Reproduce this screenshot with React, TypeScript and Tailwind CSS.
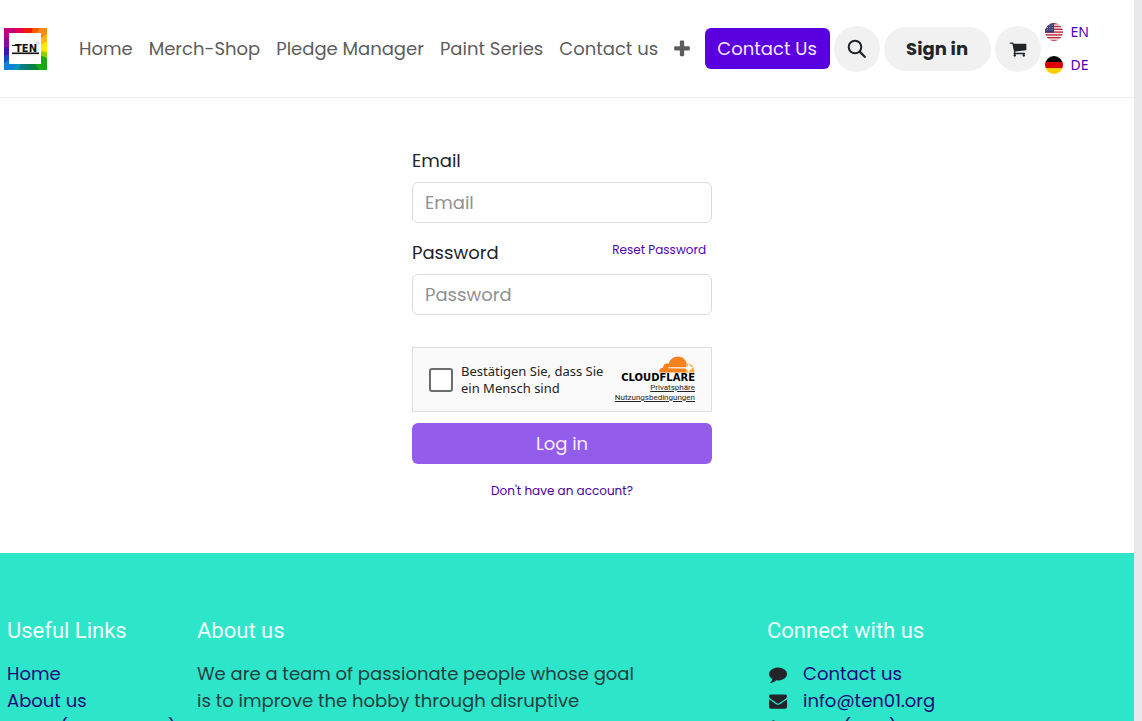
import type { ReactNode } from 'react';

const navLinks = ['Home', 'Merch-Shop', 'Pledge Manager', 'Paint Series', 'Contact us'];

const languages = [
  { code: 'EN', flag: <UsFlag /> },
  { code: 'DE', flag: <GermanFlag /> },
];

const usefulLinks = ['Home', 'About us', 'News (Merch, Pins)'];

function Logo() {
  return (
    <svg viewBox="0 0 43 42" className="h-[42px] w-[43px]" role="img" aria-label="TEN">
      <rect width="43" height="42" fill="#e30613" />
      <polygon points="0,0 12,0 21,21 0,10" fill="#c4007a" />
      <polygon points="10,0 21,0 21,21" fill="#e2004f" />
      <polygon points="19,0 31,0 21,21" fill="#f01a0c" />
      <polygon points="29,0 38,0 21,21" fill="#f55a00" />
      <polygon points="36,0 43,0 43,8 21,21" fill="#f88b13" />
      <polygon points="43,6 43,15 21,21" fill="#fdb913" />
      <polygon points="43,14 43,25 21,21" fill="#ffe900" />
      <polygon points="43,24 43,32 21,21" fill="#8fd000" />
      <polygon points="43,30 43,42 34,42 21,21" fill="#18a818" />
      <polygon points="35,42 25,42 21,21" fill="#07833f" />
      <polygon points="26,42 14,42 21,21" fill="#087d7c" />
      <polygon points="15,42 7,42 21,21" fill="#0a95bd" />
      <polygon points="8,42 0,42 0,34 21,21" fill="#0c82d8" />
      <polygon points="0,35 0,27 21,21" fill="#1a45d0" />
      <polygon points="0,28 0,18 21,21" fill="#3d14b8" />
      <polygon points="0,19 0,9 21,21" fill="#8c0aa0" />
      <rect x="5" y="5" width="32" height="31" fill="#fff" />
      <text x="22" y="24" textAnchor="middle" fontSize="10" fontWeight="700" fill="#111" fontFamily="DejaVu Sans">
        TEN
      </text>
      <rect x="8" y="17" width="7" height="1" fill="#111" />
      <rect x="8" y="24.5" width="27" height="1.6" fill="#111" />
      <circle cx="33.5" cy="15" r="1.5" fill="none" stroke="#aaa" strokeWidth="0.6" />
    </svg>
  );
}

function UsFlag() {
  return (
    <svg viewBox="0 0 18 18" className="size-[18px] rounded-full" aria-hidden="true">
      <rect width="18" height="18" fill="#f5f0f0" />
      {[0, 2.8, 5.6, 8.4, 11.2, 14, 16.8].map((y) => (
        <rect key={y} y={y} width="18" height="1.4" fill="#c0283c" />
      ))}
      <rect width="9" height="9.6" fill="#3c3b6e" />
      {[2, 4.4, 6.8].map((y) => (
        <g key={y} fill="#cfcfe4">
          <circle cx="2.4" cy={y} r="0.5" />
          <circle cx="4.8" cy={y} r="0.5" />
          <circle cx="7.2" cy={y} r="0.5" />
        </g>
      ))}
    </svg>
  );
}

function GermanFlag() {
  return (
    <svg viewBox="0 0 18 18" className="size-[18px] rounded-full" aria-hidden="true">
      <rect width="18" height="6" fill="#000" />
      <rect y="6" width="18" height="6" fill="#dd0000" />
      <rect y="12" width="18" height="6" fill="#ffce00" />
    </svg>
  );
}

function CloudIcon() {
  return (
    <svg viewBox="0 0 36 17" className="h-[17px] w-9" aria-hidden="true">
      <path
        d="M0 16.5c0-3 1.600-4.900 4.200-5.100C4 8.600 6.700 6.500 9.400 8 10.900 3.400 14.500.5 19 .5c4.500 0 7.600 2.800 8.700 6.800l-.7 9.200z"
        fill="#f6821f"
      />
      <path d="M26.500 16.500l1.800-9c4.300-.2 7.200 3.600 7.200 9z" fill="#fbad41" />
      <path d="M9.500 11.300l17.500-.1 1.600-1.200 1.300-2.500 1.300 2.700 3 1.600-3 1.600-1.600 2.900-1.600-2.500-2-1.200-16.500-.3z" fill="#fff" />
    </svg>
  );
}

function SearchIcon() {
  return (
    <svg viewBox="0 0 20 20" className="size-5" fill="none" stroke="currentColor" aria-hidden="true">
      <circle cx="8" cy="8" r="6.3" strokeWidth="2" />
      <path d="M12.600 12.600L18.500 18.500" strokeWidth="2.200" />
    </svg>
  );
}

function GlyphIcon({ path, className = 'size-[18px]' }: { path: string; className?: string }) {
  return (
    <svg viewBox="0 0 1792 1792" className={className} fill="currentColor" aria-hidden="true">
      <path d={path} />
    </svg>
  );
}

const cartPath =
  'M704 1536q0 52-38 90t-90 38-90-38-38-90 38-90 90-38 90 38 38 90zm896 0q0 52-38 90t-90 38-90-38-38-90 38-90 90-38 90 38 38 90zm128-1088v512q0 24-16.5 42.5t-40.5 21.5l-1044 122q13 60 13 70 0 16-24 64h920q26 0 45 19t19 45-19 45-45 19h-1024q-26 0-45-19t-19-45q0-11 8-31.5t16-36 21.5-40 15.5-29.5l-177-823h-204q-26 0-45-19t-19-45 19-45 45-19h256q16 0 28.5 6.5t19.5 15.5 13 24.5 8 26 5.5 29.5 4.5 26h1201q26 0 45 19t19 45z';
const plusPath =
  'M1600 736v192q0 40-28 68t-68 28h-416v416q0 40-28 68t-68 28h-192q-40 0-68-28t-28-68v-416h-416q-40 0-68-28t-28-68v-192q0-40 28-68t68-28h416v-416q0-40 28-68t68-28h192q40 0 68 28t28 68v416h416q40 0 68 28t28 68z';
const commentPath =
  'M1792 896q0 174-120 321.5t-326 233-450 85.500q-70 0-145-8-198 175-460 242-49 14-114 22h-5q-15 0-27-10.500t-16-27.500v-1q-3-4-.5-12t2-10 4.500-9.500l6-9 7-8.500 8-9q7-8 31-34.500t34.500-38 31-39.500 32.500-51 27-59 26-76q-157-89-247.500-220t-90.500-281q0-174 120-321.500t326-233 450-85.500 450 85.500 326 233 120 321.500z';
const envelopePath =
  'M1792 710v794q0 66-47 113t-113 47h-1472q-66 0-113-47t-47-113v-794q44 49 101 87 362 246 497 345 57 42 92.500 65.500t94.500 48 110 24.500h2q51 0 110-24.500t94.500-48 92.500-65.500q170-123 498-345 57-39 100-87zm0-294q0 79-49 151t-122 123q-376 261-468 325-10 7-42.500 31t-54 38.800-52 32.500-57.500 27-50 9h-2q-23 0-50-9t-57.500-27-52-32.500-54-38.800-42.500-31q-91-64-262-182.500t-205-142.500q-62-42-117-115.500t-55-136.500q0-78 41.500-130t118.500-52h1472q65 0 112.500 47t47.500 113z';
const phonePath =
  'M1600 1240q0 27-10 70.500t-21 68.500q-21 50-122 106-94 51-186 51-27 0-53-3.500t-57.500-12.500-47-14.500-55.500-20.500-49-18q-98-35-175-83-127-79-264-216t-216-264q-48-77-83-175-3-9-18-49t-20.500-55.500-14.500-47-12.500-57.500-3.500-53q0-92 51-186 56-101 106-122 25-11 68.500-21t70.500-10q14 0 21 3 18 6 53 76 11 19 30 54t35 63.500 31 53.500z';

const contacts = [
  { label: 'Contact us', path: commentPath },
  { label: 'info@ten01.org', path: envelopePath },
  { label: '+49 (1234) 567', path: phonePath },
];

function Header() {
  return (
    <header className="flex h-[98px] shrink-0 items-center border-b border-[#ececee] pr-[45px] pl-1">
      <a href="#" className="mr-8 shrink-0">
        <Logo />
      </a>
      <nav className="flex flex-1 items-center gap-4 text-lg whitespace-nowrap text-[#5c5c5c]">
        {navLinks.map((link) => (
          <a key={link} href="#">
            {link}
          </a>
        ))}
        <button type="button" aria-label="More">
          <GlyphIcon path={plusPath} className="-mx-0.5 size-5" />
        </button>
      </nav>
      <div className="flex shrink-0 items-center gap-1 text-[#212529]">
        <button type="button" className="h-[41px] w-[125px] rounded-md bg-[#5a00e0] text-lg text-[#f3e8ff]">
          Contact Us
        </button>
        <button
          type="button"
          aria-label="Search"
          className="flex size-[46px] items-center justify-center rounded-full bg-[#f1f1f1]"
        >
          <SearchIcon />
        </button>
        <a
          href="#"
          className="flex h-11 w-[107px] items-center justify-center rounded-full bg-[#f1f1f1] text-lg font-bold"
        >
          Sign in
        </a>
        <a
          href="#"
          aria-label="Cart"
          className="flex size-[46px] items-center justify-center rounded-full bg-[#f1f1f1]"
        >
          <GlyphIcon path={cartPath} />
        </a>
        <ul className="flex flex-col gap-3 font-['Noto_Sans',sans-serif] text-sm text-[#5000b4]">
          {languages.map(({ code, flag }) => (
            <li key={code}>
              <a href="#" className="flex h-[21px] items-center gap-2">
                {flag}
                {code}
              </a>
            </li>
          ))}
        </ul>
      </div>
    </header>
  );
}

function HumanCheck() {
  return (
    <div className="mt-8 flex h-[65px] items-center border border-[#dedede] bg-[#fafafa] px-4 font-['Noto_Sans',sans-serif] text-[#232323]">
      <input
        id="human"
        type="checkbox"
        className="size-6 shrink-0 appearance-none rounded-[3px] border-2 border-[#6d6d6d] bg-white"
      />
      <label htmlFor="human" className="ml-2 shrink-0 text-[13px] leading-[17px] whitespace-nowrap">
        Bestätigen Sie, dass Sie
        <br />
        ein Mensch sind
      </label>
      <div className="ml-auto flex flex-col items-end font-[Roboto,sans-serif] text-[8px] leading-[10px]">
        <CloudIcon />
        <span className="font-['DejaVu_Sans',sans-serif] text-[10px] font-bold text-black">CLOUDFLARE</span>
        <a href="#" className="underline">
          Privatsphäre
        </a>
        <a href="#" className="underline">
          Nutzungsbedingungen
        </a>
      </div>
    </div>
  );
}

function LoginForm() {
  const inputClass =
    'mt-2 block h-[41px] w-full rounded-md border border-[#d8dadd] px-3 text-lg placeholder:text-[#919191]';

  return (
    <form className="mx-auto w-[300px] text-lg leading-[27px] text-[#212529]">
      <label htmlFor="email" className="block">
        Email
      </label>
      <input id="email" type="email" placeholder="Email" className={inputClass} />
      <div className="mt-4 flex justify-between">
        <label htmlFor="password">Password</label>
        <a href="#" className="pr-1.5 text-xs leading-[22px] text-[#5000b4]">
          Reset Password
        </a>
      </div>
      <input id="password" type="password" placeholder="Password" className={inputClass} />
      <HumanCheck />
      <button type="button" className="mt-[11px] h-[41px] w-full rounded-md bg-[#935ceb] text-[#f7efff]">
        Log in
      </button>
      <a href="#" className="mt-[13px] block text-center text-xs leading-[27px] text-[#4600a0]">
        Don't have an account?
      </a>
    </form>
  );
}

function FooterColumn({ title, children }: { title: string; children: ReactNode }) {
  return (
    <section>
      <h5 className="mb-4 font-[Roboto,sans-serif] text-[22px] leading-[27px] text-[#f2fffc]">{title}</h5>
      {children}
    </section>
  );
}

function Footer() {
  return (
    <footer className="grid flex-1 shrink-0 grid-cols-[190px_1fr_367px] bg-[#2de5c9] pt-16 pb-16 pl-[7px] text-lg leading-[27px] text-[#20403f]">
      <FooterColumn title="Useful Links">
        <ul className="text-[#1b0a78]">
          {usefulLinks.map((link) => (
            <li key={link}>
              <a href="#">{link}</a>
            </li>
          ))}
        </ul>
      </FooterColumn>
      <FooterColumn title="About us">
        <p className="max-w-[445px]">
          We are a team of passionate people whose goal is to improve the hobby through disruptive
          products.
        </p>
      </FooterColumn>
      <FooterColumn title="Connect with us">
        <ul className="text-[#212529]">
          {contacts.map(({ label, path }) => (
            <li key={label} className="flex items-center gap-4 pl-0.5">
              <GlyphIcon path={path} />
              <a href="#" className="text-[#1b0a78]">
                {label}
              </a>
            </li>
          ))}
        </ul>
      </FooterColumn>
    </footer>
  );
}

export default function App() {
  return (
    <div className="flex h-screen overflow-hidden bg-white font-[Poppins,Inter,sans-serif]">
      <div className="flex min-w-0 flex-1 flex-col">
        <Header />
        <main className="shrink-0 pt-[49px] pr-2.5 pb-[49px]">
          <LoginForm />
        </main>
        <Footer />
      </div>
      <div className="w-2 shrink-0 bg-[#e9e9ec]" />
    </div>
  );
}
